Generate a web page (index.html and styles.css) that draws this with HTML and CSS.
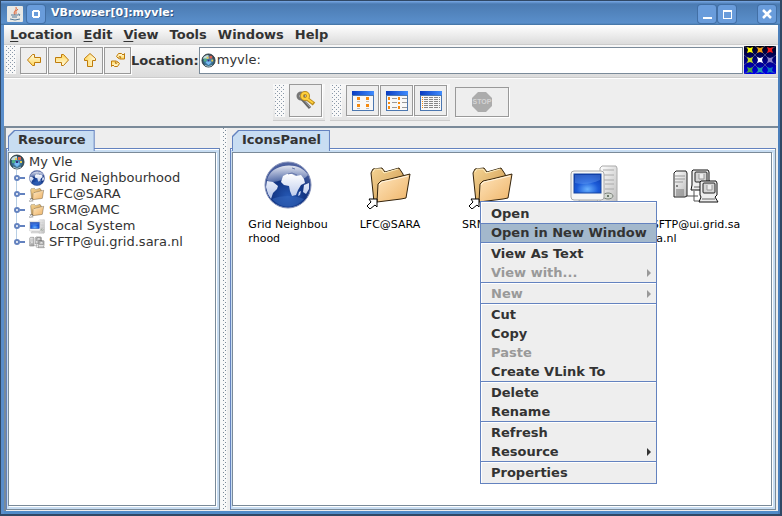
FILE: index.html
```
<!DOCTYPE html>
<html lang="en">
<head>
<meta charset="utf-8">
<title>VBrowser[0]:myvle:</title>
<link rel="stylesheet" href="styles.css">
</head>
<body>
<svg class="defs" aria-hidden="true">
  <defs>
    <radialGradient id="sea" cx="50%" cy="75%" r="75%"><stop offset="0" stop-color="#2558b4"/><stop offset=".5" stop-color="#123482"/><stop offset="1" stop-color="#5668a4"/></radialGradient>
    <linearGradient id="gloss" x1="0" y1="0" x2="0" y2="1"><stop offset="0" stop-color="#fff" stop-opacity=".85"/><stop offset="1" stop-color="#cdd6ee" stop-opacity=".3"/></linearGradient>
    <linearGradient id="land" x1="0" y1="0" x2="0" y2="1"><stop offset="0" stop-color="#fff"/><stop offset="1" stop-color="#b4c4ea"/></linearGradient>
    <linearGradient id="paper" x1="0" y1="0" x2="1" y2="1"><stop offset="0" stop-color="#ffe6be"/><stop offset="1" stop-color="#eeb468"/></linearGradient>
    <linearGradient id="back" x1="0" y1="0" x2="1" y2="1"><stop offset="0" stop-color="#f6d595"/><stop offset="1" stop-color="#c99348"/></linearGradient>
    <radialGradient id="screen" cx="50%" cy="80%" r="80%"><stop offset="0" stop-color="#69b2ff"/><stop offset=".5" stop-color="#1c5bd8"/><stop offset="1" stop-color="#0b39ad"/></radialGradient>
    <linearGradient id="case" x1="0" y1="0" x2="1" y2="1"><stop offset="0" stop-color="#fff"/><stop offset="1" stop-color="#bbb"/></linearGradient>
    <linearGradient id="gold" x1="0" y1="0" x2="0" y2="1"><stop offset="0" stop-color="#fffbe0"/><stop offset="1" stop-color="#ffd65c"/></linearGradient>
    <linearGradient id="bar" x1="0" y1="0" x2="1" y2="0"><stop offset="0" stop-color="#0a3cc0"/><stop offset="1" stop-color="#3f8cff"/></linearGradient>
    <linearGradient id="night" x1="0" y1="0" x2="0" y2="1"><stop offset="0" stop-color="#000010"/><stop offset="1" stop-color="#0000e8"/></linearGradient>
    <radialGradient id="orbbg" cx="50%" cy="55%" r="55%"><stop offset="0" stop-color="#5b9fd0"/><stop offset=".6" stop-color="#386f91"/><stop offset="1" stop-color="#26343c"/></radialGradient>

    <symbol id="globe" viewBox="0 0 48 48">
      <circle cx="24" cy="24" r="23" fill="url(#sea)" stroke="#8490b8"/>
      <path d="M4 16C10 2 36 0 44 14C38 22 28 17 19 19C12 20 8 23 3 19z" fill="url(#gloss)"/>
      <path d="M19 15l4-2 5 0 4 2 5-1 3 4 1 4-4 2-3 5-2 5-4 1-2-5-1-5-5-1-3-3zM3 20l6 1 5 4-1 3-4 4-2 6-3-5-2-7zM40 24l5-2 0 6-3 5-3-2zM35 31l2-1-1 4-2 1z" fill="url(#land)"/>
      <path d="M24 13l4-1 5 2M28 7l3 1" fill="none" stroke="#6879ac"/>
      <path d="M8 38C17 34 31 34 40 38C31 48 17 48 8 38z" fill="#3667bd" opacity=".55"/>
    </symbol>
    <symbol id="folder" viewBox="0 0 48 48">
      <path d="M8 41L5 12l2-4 9-1 3 4 14-4 4 6 1 5z" fill="url(#back)" stroke="#33230c"/>
      <path d="M7 11l2-3 6 0 3 4 14-4" fill="none" stroke="#fff0c4"/>
      <path d="M11 41l1-18 3-3 9-2 20-5-4 24-5 1z" fill="url(#paper)" stroke="#33230c"/>
      <path d="M13 24l3-3 9-2 17-4" fill="none" stroke="#fff4df"/>
      <path d="M3 38h8v8l-2-2-5 4-3-3 4-4z" fill="#fff" stroke="#000"/>
    </symbol>
    <symbol id="computer" viewBox="0 0 48 48">
      <path d="M30 7l2-2h14l1 2v36l-2 3H30z" fill="url(#case)" stroke="#aaa"/>
      <path d="M33 9h11M33 14h11M33 19h11M35 23h9M35 28h9" stroke="#aaa" fill="none"/>
      <ellipse cx="38" cy="35" rx="5" ry="3" fill="#d4d9d2" stroke="#7c837b"/><circle cx="38" cy="35" r="1" fill="#465646"/>
      <path d="M10 38h17l3 7H6z" fill="#ddd" stroke="#aaa"/>
      <rect x="1" y="10" width="33" height="29" rx="3" fill="#f6f6f6" stroke="#aaa"/>
      <rect x="4" y="13" width="27" height="19" fill="url(#screen)" stroke="#1746a2"/>
      <path d="M5 14h25v5q-13 6-25 3z" fill="#86b8ff" opacity=".3"/>
    </symbol>
    <symbol id="servers" viewBox="0 0 48 48">
      <path d="M15 35h11M22 30v10h6M37 23v-4" stroke="#555" fill="none"/>
      <path d="M2 12l2-2h10l1 2v23l-2 1H2z" fill="url(#case)" stroke="#222"/>
      <path d="M3 15h10M3 18h10M3 21h8" stroke="#999"/><path d="M5 28v7M7 28v7M9 28v7M11 28v7" stroke="#777"/><path d="M4 25h2" stroke="#222"/>
      <path d="M21 9h15l1 2v11l-2 2 2 5H19l1-5V10z" fill="#eee" stroke="#111"/>
      <rect x="23" y="11" width="12" height="10" rx="1" fill="#d4d4d4" stroke="#222"/><path d="M27 13v5h5v-5" fill="#eee" stroke="#999"/><path d="M22 26h14" stroke="#666"/>
      <path d="M29 20h15l1 2v12l-2 2 3 5H27l2-5-1-2V21z" fill="#eee" stroke="#111"/>
      <rect x="31" y="22" width="12" height="10" rx="1" fill="#d4d4d4" stroke="#222"/><path d="M35 24v5h5v-5" fill="#eee" stroke="#999"/><path d="M30 38h13" stroke="#666"/>
    </symbol>
    <symbol id="orb" viewBox="0 0 16 16">
      <circle cx="8" cy="8" r="7" fill="url(#orbbg)" stroke="#37444a"/>
      <path d="M2 6q1-4 6-4v4z" fill="#c4dcdf"/><path d="M3 6h3v3H3z" fill="#50b088"/><path d="M9 3h3v3H9z" fill="#d8604c"/><path d="M6 4h2v2H6zM11 7h2v2h-2z" fill="#e2cc53"/><path d="M5 10l3-3 3 3-3 3z" fill="#76baf2"/><path d="M7 7h2v2H7z" fill="#332f78"/><path d="M4 13q4 3 8 0" fill="none" stroke="#a8c0c8"/>
    </symbol>
    <symbol id="handle" viewBox="0 0 12 8"><circle cx="3" cy="4" r="2" fill="#fff" stroke="#6382bf" stroke-width="2"/><path d="M6 4h5" stroke="#6382bf" stroke-width="2"/></symbol>
    <symbol id="arrow" viewBox="0 0 16 16"><path d="M1.500 8l5-5.500h2v3h6v5h-6v3h-2z" fill="url(#gold)" stroke="#bf7b0b" stroke-linejoin="round"/></symbol>
    <symbol id="viewwin" viewBox="0 0 22 20"><path d="M0 0h22v20H0z" fill="#4c77b0"/><path d="M1 5h20v14H1z" fill="#f8f8f8"/><path d="M0 0h22v4H0z" fill="url(#bar)"/></symbol>
  </defs>
</svg>

<div class="window">
  <header class="titlebar">
    <svg class="java" viewBox="0 0 16 16" aria-hidden="true"><rect width="16" height="16" rx="1" fill="#e8e8e5"/><path d="M9 1q1 2-1 4t0 4M11 3q-3 2-2 5" fill="none" stroke="#df6739"/><path d="M4 9h7M5 11h5M3 13q5 2 10 0M11 8q3 0 1 2" fill="none" stroke="#547997"/></svg>
    <button class="wbtn" aria-label="Window menu"><svg viewBox="0 0 18 18"><path d="M6 5h6v1h1v6h-1v1H6v-1H5V6h1zM7 7v4h4V7z" fill="#fff" fill-rule="evenodd"/></svg></button>
    <h1>VBrowser[0]:myvle:</h1>
    <div class="winctl">
      <button class="wbtn" aria-label="Minimize"><svg viewBox="0 0 18 18"><path d="M5 12h9v2H5z" fill="#fff"/></svg></button>
      <button class="wbtn" aria-label="Maximize"><svg viewBox="0 0 18 18"><path d="M5 5h9v9H5zM6 7v6h7V7z" fill="#fff" fill-rule="evenodd"/></svg></button>
      <button class="wbtn close" aria-label="Close"><svg viewBox="0 0 18 18"><path d="M5 5l8 8M13 5l-8 8" stroke="#fff" stroke-width="2.500"/></svg></button>
    </div>
  </header>

  <nav class="menubar">
    <button><u>L</u>ocation</button><button><u>E</u>dit</button><button><u>V</u>iew</button><button>Tools</button><button>Windows</button><button>Help</button>
  </nav>

  <div class="navbar">
    <div class="grip"></div>
    <div class="navbtns">
      <button class="tbtn" aria-label="Back"><svg viewBox="0 0 16 16"><use href="#arrow"/></svg></button>
      <button class="tbtn" aria-label="Forward"><svg viewBox="0 0 16 16"><use href="#arrow" transform="rotate(180 8 8)"/></svg></button>
      <button class="tbtn" aria-label="Up"><svg viewBox="0 0 16 16"><use href="#arrow" transform="rotate(90 8 8)"/></svg></button>
      <button class="tbtn" aria-label="Refresh"><svg viewBox="0 0 16 16"><g id="half"><path d="M6.500 4.500l2-3h3l1.500 1.500 1.500-1.500v5.500h-5l1.500-2-1.500-.5-1 2z" fill="url(#gold)" stroke="#bf7b0b" stroke-linejoin="round"/></g><use href="#half" transform="rotate(180 8 8)"/></svg></button>
    </div>
    <label for="loc">Location:</label>
    <div class="field"><svg viewBox="0 0 16 16" aria-hidden="true"><use href="#orb"/></svg><input id="loc" type="text" value="myvle:"></div>
    <svg class="logo" viewBox="0 0 32 28" aria-hidden="true">
      <path d="M0 0h32v28H0z" fill="url(#night)"/>
      <g fill="none" stroke="#6470a0"><path d="M0 0l6 4 10 10 10 10 6 4M0 9l6 5 10 10 5 4M11 0l5 4 10 10 6 5M32 0l-6 4-10 10L6 24l-6 4M21 0l-5 4L6 14l-6 5M32 9l-6 5-10 10-5 4" opacity=".6"/></g>
      <path d="M3 1l3 1 3-1-1 3 1 3-3-1-3 1 1-3z" fill="#ff0"/><path d="M13 1l3 1 3-1-1 3 1 3-3-1-3 1 1-3z" fill="#f5a00f"/><path d="M23 1l3 1 3-1-1 3 1 3-3-1-3 1 1-3z" fill="#f01818"/>
      <path d="M3 11l3 1 3-1-1 3 1 3-3-1-3 1 1-3z" fill="#c2dc25"/><path d="M13 11l3 1 3-1-1 3 1 3-3-1-3 1 1-3z" fill="#fff"/><path d="M23 11l3 1 3-1-1 3 1 3-3-1-3 1 1-3z" fill="#8a80c8"/>
      <path d="M3 21l3 1 3-1-1 3 1 3-3-1-3 1 1-3z" fill="#48a043"/><path d="M13 21l3 1 3-1-1 3 1 3-3-1-3 1 1-3z" fill="#2599aa"/><path d="M23 21l3 1 3-1-1 3 1 3-3-1-3 1 1-3z" fill="#0970bd"/>
    </svg>
  </div>

  <div class="tools">
    <div class="group keys"><div class="grip"></div>
      <button class="tbtn big" aria-label="Credentials"><svg viewBox="0 0 20 20"><g fill="none"><circle cx="5" cy="5" r="3" stroke="#777" stroke-width="3"/><path d="M6 8l8 9" stroke="#666" stroke-width="3"/><path d="M7 8l7 8" stroke="#aaa"/><circle cx="9" cy="5" r="3" stroke="#b98a1c" stroke-width="4"/><path d="M10 7l8 6" stroke="#b98a1c" stroke-width="4"/><circle cx="9" cy="5" r="3" stroke="#ffd03c" stroke-width="2"/><path d="M10 7l7 5" stroke="#ffd03c" stroke-width="2"/></g></svg></button>
    </div>
    <div class="group views"><div class="grip"></div>
      <button class="tbtn big" aria-label="Icons view"><svg viewBox="0 0 22 20"><use href="#viewwin"/><path d="M5 6h3v3H5zM14 6h3v3h-3zM5 13h3v3H5zM14 13h3v3h-3z" fill="#f68a0e"/><path d="M5 10.500h3M14 10.500h3M5 17.500h3M14 17.500h3" stroke="#bbb"/></svg></button>
      <button class="tbtn big" aria-label="List view"><svg viewBox="0 0 22 20"><use href="#viewwin"/><path d="M2 6h2v3H2zM2 11h2v2H2zM2 15h2v3H2zM12 6h2v3h-2zM12 11h2v2h-2zM12 15h2v3h-2z" fill="#f68a0e"/><path d="M6 7.500h5M6 11.500h5M6 16.500h5M16 7.500h5M16 11.500h5M16 16.500h5" stroke="#999"/></svg></button>
      <button class="tbtn big" aria-label="Details view"><svg viewBox="0 0 22 20"><use href="#viewwin"/><path d="M2 6h1v1H2zM2 8h1v1H2zM2 10h1v1H2zM2 12h1v1H2zM2 14h1v1H2zM2 16h1v1H2z" fill="#f68a0e"/><path d="M4 6.500h16M4 8.500h16M4 10.500h16M4 12.500h16M4 14.500h16M4 16.500h16" stroke="#888" stroke-dasharray="4 1"/></svg></button>
    </div>
    <button class="tbtn stop" disabled aria-label="Stop"><svg viewBox="0 0 20 20"><path d="M6 0h8l6 6v8l-6 6H6l-6-6V6z" fill="#acacac"/><text x="10" y="12" text-anchor="middle">STOP</text></svg></button>
  </div>

  <main class="split">
    <section class="pane left">
      <button class="tab"><span>Resource</span></button>
      <div class="body"><div class="view">
        <ul class="tree">
          <li class="root"><svg class="ic" viewBox="0 0 16 16"><use href="#orb"/></svg>My Vle</li>
          <li><svg class="hd" viewBox="0 0 12 8"><use href="#handle"/></svg><svg class="ic" viewBox="0 0 48 48"><use href="#globe"/></svg>Grid Neighbourhood</li>
          <li><svg class="hd" viewBox="0 0 12 8"><use href="#handle"/></svg><svg class="ic" viewBox="0 0 48 48"><use href="#folder"/></svg>LFC@SARA</li>
          <li><svg class="hd" viewBox="0 0 12 8"><use href="#handle"/></svg><svg class="ic" viewBox="0 0 48 48"><use href="#folder"/></svg>SRM@AMC</li>
          <li><svg class="hd" viewBox="0 0 12 8"><use href="#handle"/></svg><svg class="ic" viewBox="0 0 48 48"><use href="#computer"/></svg>Local System</li>
          <li><svg class="hd" viewBox="0 0 12 8"><use href="#handle"/></svg><svg class="ic" viewBox="0 0 48 48"><use href="#servers"/></svg>SFTP@ui.grid.sara.nl</li>
        </ul>
      </div></div>
    </section>
    <div class="divider"></div>
    <section class="pane right">
      <button class="tab"><span>IconsPanel</span></button>
      <div class="body"><div class="view">
        <ul class="icons">
          <li><svg viewBox="0 0 48 48"><use href="#globe"/></svg><span>Grid Neighbou<br>rhood</span></li>
          <li><svg viewBox="0 0 48 48"><use href="#folder"/></svg><span>LFC@SARA</span></li>
          <li><svg viewBox="0 0 48 48"><use href="#folder"/></svg><span>SRM@AMC</span></li>
          <li><svg viewBox="0 0 48 48"><use href="#computer"/></svg><span>Local System</span></li>
          <li><svg viewBox="0 0 48 48"><use href="#servers"/></svg><span>SFTP@ui.grid.sa<br>ra.nl</span></li>
        </ul>
        <div class="popup" role="menu">
          <button role="menuitem">Open</button>
          <button role="menuitem" class="active">Open in New Window</button>
          <hr>
          <button role="menuitem">View As Text</button>
          <button role="menuitem" class="sub" disabled>View with...</button>
          <hr>
          <button role="menuitem" class="sub" disabled>New</button>
          <hr>
          <button role="menuitem">Cut</button>
          <button role="menuitem">Copy</button>
          <button role="menuitem" disabled>Paste</button>
          <button role="menuitem">Create VLink To</button>
          <hr>
          <button role="menuitem">Delete</button>
          <button role="menuitem">Rename</button>
          <hr>
          <button role="menuitem">Refresh</button>
          <button role="menuitem" class="sub">Resource</button>
          <hr>
          <button role="menuitem">Properties</button>
        </div>
      </div></div>
    </section>
  </main>
</div>
</body>
</html>
```
FILE: styles.css
```
* { box-sizing: border-box; }
body { margin: 0; font: 13px/16px "DejaVu Sans", sans-serif; color: #333; }
button, input { font: inherit; color: inherit; margin: 0; padding: 0; border: 0; background: none; border-radius: 0; }
ul { list-style: none; margin: 0; padding: 0; }
svg { display: block; flex: none; }
.defs { position: absolute; width: 0; height: 0; }

.window { height: 100vh; display: flex; flex-direction: column; background: #eee; border: 1px solid #304865; border-width: 1px 2px 2px 1px; box-shadow: inset 3px 0 #5a8ecb, inset -2px 0 #4b7fbb, inset 0 -3px #508bc8; padding: 0 2px 3px 3px; }

.titlebar { display: flex; align-items: center; height: 24px; margin: 0 -2px 0 -3px; padding: 1px 4px 0 6px; background: linear-gradient(#79a9e6 0, #4b7bb2 3px, #5a8fcb 22px, #41719f 24px); }
.java { width: 16px; height: 16px; }
.wbtn { width: 18px; height: 18px; border-radius: 3px; background: #699cdb; box-shadow: 0 0 0 1px #426fa5; }
.wbtn svg { width: 18px; height: 18px; }
.java + .wbtn { margin-left: 4px; }
.titlebar h1 { flex: 1; margin: -2px 0 0 6px; font: bold 11px/20px "DejaVu Sans", sans-serif; color: #fff; text-shadow: 1px 1px #34567f; }
.winctl { display: flex; gap: 2px; }
.close { margin-left: 20px; }

.menubar { display: flex; gap: 11px; height: 20px; padding: 0 6px; border-bottom: 1px solid #ccc; background: linear-gradient(#fff, #dcdcdc); font-weight: bold; }
.menubar u { text-underline-offset: 2px; }

.navbar { display: flex; align-items: center; height: 33px; padding: 1px 2px 3px; border-bottom: 1px solid #ccc; box-shadow: 0 1px #fff; background: linear-gradient(#f8f8f8, #dcdcdc); }
.grip { width: 10px; align-self: stretch; background: conic-gradient(at 1px 1px, transparent 75%, #8a98a8 0) 0 0 / 4px 4px, conic-gradient(at 1px 1px, transparent 75%, #8a98a8 0) 2px 2px / 4px 4px, #f8f8f8; }
.navbtns { display: flex; gap: 1px; margin-left: 4px; }
.tbtn { display: flex; align-items: center; justify-content: center; width: 27px; height: 27px; border: 1px solid #999; background: #eee; box-shadow: 1px 1px #fff; }
.tbtn svg { width: 16px; height: 16px; }
.navbar label { padding-top: 2px; font-weight: bold; }
.field { flex: 1; display: flex; align-items: center; height: 27px; padding-left: 1px; border: 1px solid #7a8a99; background: #fff; }
.field svg { width: 15px; height: 15px; }
.field input { flex: 1; min-width: 0; padding-left: 1px; outline: 0; }
.logo { width: 32px; height: 28px; margin-left: 1px; }

.tools { display: flex; align-items: center; justify-content: center; height: 48px; }
.group { display: flex; align-items: center; height: 37px; padding: 1px 3px 3px 2px; border-bottom: 1px solid #ccc; background: linear-gradient(#f8f8f8, #e4e4e4); }
.big { width: 33px; height: 33px; }
.keys { margin-right: 5px; }
.keys .grip, .views .grip { margin-right: 4px; }
.keys .big svg { width: 20px; height: 20px; }
.views .big { height: 31px; }
.views .big + .big { margin-left: 1px; }
.views .big svg { width: 22px; height: 20px; }
.stop { width: 54px; height: 30px; margin-left: 5px; }
.stop svg { width: 20px; height: 20px; }
.stop text { font: bold 7px "Liberation Sans", sans-serif; fill: #d4d4d4; }

.split { flex: 1; min-height: 0; display: flex; border-top: 2px solid #7a8a99; border-left: 2px solid #7a8a99; padding-bottom: 1px; }
.pane { display: flex; flex-direction: column; padding-top: 2px; min-width: 0; }
.left { flex: 0 0 214px; }
.right { flex: 1; margin-right: 2px; }
.divider { width: 10px; border: solid #f8f8f8; border-width: 0 3px 0 3px; border-right-color: #eee; background: conic-gradient(at 1px 1px, transparent 75%, #7a8a99 0) 0 0 / 4px 4px, conic-gradient(at 1px 1px, transparent 75%, #7a8a99 0) 2px 2px / 4px 4px, #f8f8f8; }
.tab { position: relative; z-index: 1; align-self: flex-start; height: 21px; margin: 0 0 -3px 2px; padding: 1px 1px 0; background: #6382bf; clip-path: polygon(6px 0, 100% 0, 100% 100%, 0 100%, 0 6px); font-weight: bold; }
.tab span { display: block; height: 20px; padding: 0 8px 0 9px; line-height: 18px; background: #c8ddf2; clip-path: polygon(6px 0, 100% 0, 100% 100%, 0 100%, 0 6px); }
.body { flex: 1; display: flex; border: 1px solid #7a8a99; border-top-color: #6382bf; border-left-color: #6382bf; background: #c8ddf2; box-shadow: inset 0 1px #fff; padding: 3px 2px 2px 1px; }
.view { position: relative; flex: 1; min-width: 0; background: #fff; border: solid #7a8a99; border-width: 1px 1px 1px 1px; box-shadow: 1px 1px #fff; margin: 0 1px 1px 0; }

.tree { padding-top: 1px; }
.tree li { display: flex; align-items: center; height: 16px; padding-left: 5px; }
.tree .root { padding-left: 0; }
.tree .ic { width: 16px; height: 16px; margin-right: 4px; }
.tree .hd { width: 12px; height: 8px; margin-right: 3px; }
.tree li + li { background: linear-gradient(#b8cfe5, #b8cfe5) 7px 0 / 1px 100% no-repeat; }
.tree li:last-child { background-size: 1px 50%; }

.icons { display: flex; padding: 8px 0 0 4px; font-size: 11px; line-height: 14px; color: #000; }
.icons li { width: 102px; display: flex; flex-direction: column; align-items: center; white-space: nowrap; }
.icons svg { width: 48px; height: 48px; margin-bottom: 9px; }

.popup { position: absolute; left: 247px; top: 48px; width: 177px; padding: 2px 0 1px; border: 1px solid #6382bf; background: #eee; box-shadow: inset 1px 1px #fff; }
.popup button { display: flex; align-items: center; justify-content: space-between; width: 100%; height: 19px; padding: 0 5px 0 10px; font-weight: bold; }
.popup .active { background: #a3b8cc; border-top: 1px solid #6382bf; }
.popup button:disabled { color: #999; }
.popup .sub::after { content: ""; border: 4px solid transparent; border-left-color: currentColor; border-right: 0; }
.popup hr { height: 2px; margin: 0; border: 0; border-top: 1px solid #6382bf; background: #fff; }
```
